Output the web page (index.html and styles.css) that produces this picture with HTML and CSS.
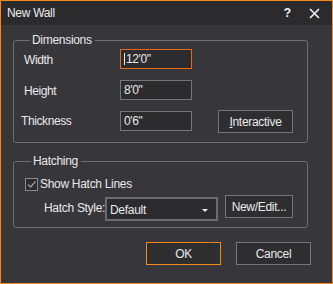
FILE: index.html
```html
<!DOCTYPE html>
<html lang="en">
<head>
    <meta charset="UTF-8">
    <title>New Wall</title>
    <link rel="stylesheet" href="styles.css">
</head>
<body>

<div class="window">
    <div class="titlebar">
        <span class="title">New Wall</span>
        <span class="help">?</span>
        <span class="close">
            <svg width="11" height="11" viewBox="0 0 11 11"><path d="M1 1 L10 10 M10 1 L1 10" stroke="#f2f2f2" stroke-width="1.6"/></svg>
        </span>
    </div>

    <div class="content">
        <fieldset class="group dims">
            <legend>Dimensions</legend>
            <div class="dims-grid">
                <label class="field-label">Width</label>
                <div class="textbox focused"><span class="caret"></span>12'0"</div>
                <span></span>

                <label class="field-label">Height</label>
                <div class="textbox">8'0"</div>
                <span></span>

                <label class="field-label thick">Thickness</label>
                <div class="textbox">0'6"</div>
                <button class="btn interactive"><u>I</u>nteractive</button>
            </div>
        </fieldset>

        <fieldset class="group hatch">
            <legend>Hatching</legend>
            <div class="check-row">
                <span class="checkbox">
                    <svg width="11" height="11" viewBox="0 0 11 11"><path d="M2 5.5 L4.5 8 L9.5 2.5" fill="none" stroke="#9c9c9c" stroke-width="1.3"/></svg>
                </span>
                <span>Show Hatch Lines</span>
            </div>
            <div class="style-row">
                <label class="style-label">Hatch Style:</label>
                <div class="select">
                    <span>Default</span>
                    <span class="arrow"></span>
                </div>
                <button class="btn edit">New/Edit...</button>
            </div>
        </fieldset>

        <div class="actions">
            <button class="btn default">OK</button>
            <button class="btn">Cancel</button>
        </div>
    </div>
</div>

</body>
</html>
```

FILE: styles.css
```css
body {
    margin: 0;
    background: #37363b;
    font-family: 'Liberation Sans', Arial, sans-serif;
    font-size: 11px;
    letter-spacing: -0.2px;
    color: #e9e9e9;
}

.window {
    width: 333px;
    height: 284px;
    box-sizing: border-box;
    border: 1px solid #f7881f;
    background: #37363b;
}

.titlebar {
    height: 24px;
    background: #2b2b2e;
    display: flex;
    align-items: center;
    padding-left: 6px;
}

.title {
    font-size: 12px;
    letter-spacing: -0.3px;
    color: #ececec;
    flex: 1;
}

.help {
    font-size: 12px;
    font-weight: bold;
    color: #f2f2f2;
    margin-right: 18px;
}

.close {
    display: flex;
    margin-right: 12px;
}

.content {
    padding: 8px 24px 0 12px;
}

.group {
    margin: 0;
    padding: 0;
    border: 1px solid #6f6f71;
    border-radius: 3px;
}

.group legend {
    margin-left: 6px;
    padding: 0 3px 0 2px;
    line-height: 14px;
    font-size: 12px;
    letter-spacing: -0.3px;
}

.dims {
    padding: 2px 0 11px 10px;
}

.dims-grid {
    display: grid;
    grid-template-columns: 96px 98px 75px;
    grid-auto-rows: 20px;
    row-gap: 11px;
    align-items: center;
}

.field-label {
    font-size: 12px;
    letter-spacing: -0.4px;
    padding-top: 2px;
}

.field-label.thick {
    margin-left: -3px;
    padding-top: 0;
}

.textbox {
    width: 72px;
    height: 20px;
    box-sizing: border-box;
    border: 1px solid #767678;
    background: #2c2c2f;
    padding-left: 3px;
    line-height: 18px;
    font-size: 12px;
    letter-spacing: -0.4px;
    display: flex;
    align-items: center;
}

.textbox.focused {
    border-color: #e8661a;
}

.caret {
    width: 1px;
    height: 12px;
    background: #e9e9e9;
    margin-right: 1px;
}

.btn {
    font-family: inherit;
    font-size: 12px;
    letter-spacing: -0.3px;
    color: #e9e9e9;
    background: #2e2e31;
    border: 1px solid #767678;
    height: 23px;
    width: 75px;
    padding: 0;
}

.interactive {
    align-self: start;
    margin-top: -1px;
}

.hatch {
    margin-top: 11px;
    padding: 9px 0 6px 11px;
}

.check-row {
    display: flex;
    align-items: center;
    gap: 2px;
    font-size: 12px;
    letter-spacing: -0.3px;
}

.checkbox {
    width: 11px;
    height: 11px;
    border: 1px solid #8a8a8c;
    background: #2c2c2f;
    display: flex;
}

.style-row {
    display: flex;
    align-items: flex-start;
    margin-top: 4px;
}

.style-label {
    font-size: 12px;
    letter-spacing: -0.3px;
    margin: 6px 0 0 19px;
    width: 61px;
    white-space: nowrap;
}

.select {
    width: 113px;
    height: 24px;
    box-sizing: border-box;
    margin-top: 2px;
    border: 2px solid #6c6c6e;
    background: #2b2b2e;
    display: flex;
    align-items: center;
    justify-content: space-between;
    padding: 2px 8px 0 3px;
    font-size: 12px;
    letter-spacing: -0.3px;
}

.arrow {
    width: 0;
    height: 0;
    border-left: 3px solid transparent;
    border-right: 3px solid transparent;
    border-top: 3px solid #f0f0f0;
}

.edit {
    width: 68px;
    margin-left: 7px;
}

.btn.default {
    border-color: #f7881f;
}

.actions {
    display: flex;
    justify-content: flex-end;
    gap: 15px;
    margin-top: 14px;
    margin-right: -3px;
}
```
